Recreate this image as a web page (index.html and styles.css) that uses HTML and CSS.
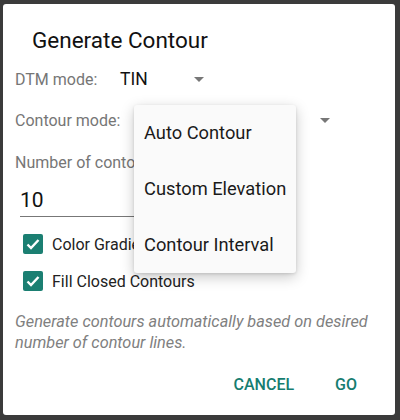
FILE: index.html
```html
<!DOCTYPE html>
<html lang="en">
<head>
  <meta charset="UTF-8">
  <title>Generate Contour</title>
  <link rel="stylesheet" href="styles.css">
</head>
<body>
  <div class="dialog">
    <h2 class="title">Generate Contour</h2>

    <div class="row">
      <span class="label">DTM mode:</span>
      <div class="select dtm">
        <span class="value">TIN</span>
        <span class="arrow"></span>
      </div>
    </div>

    <div class="row">
      <span class="label">Contour mode:</span>
      <div class="select mode">
        <span class="value"></span>
        <span class="arrow"></span>
      </div>
    </div>

    <div class="label num-label">Number of contour lines:</div>
    <div class="num-input">10</div>

    <label class="check"><span class="box"><svg viewBox="0 0 20 20" width="20" height="20"><path d="M4.5 10.5l3.5 3.5 7.5-8" fill="none" stroke="#fff" stroke-width="2.4"/></svg></span>Color Gradient</label>
    <label class="check"><span class="box"><svg viewBox="0 0 20 20" width="20" height="20"><path d="M4.5 10.5l3.5 3.5 7.5-8" fill="none" stroke="#fff" stroke-width="2.4"/></svg></span>Fill Closed Contours</label>

    <p class="hint">Generate contours automatically based on desired number of contour lines.</p>

    <div class="actions">
      <button class="btn">CANCEL</button>
      <button class="btn">GO</button>
    </div>

    <ul class="menu">
      <li>Auto Contour</li>
      <li>Custom Elevation</li>
      <li>Contour Interval</li>
    </ul>
  </div>
</body>
</html>
```

FILE: styles.css
```css
body {
  margin: 0;
  background: #3b3b3b;
  font-family: Roboto, sans-serif;
  height: 420px;
  overflow: hidden;
}
.dialog {
  position: relative;
  margin: 4px 5px 0 3px;
  height: 411px;
  background: #fff;
  border-radius: 3px;
  box-sizing: border-box;
  padding: 22px 0 0 12px;
}
.title {
  margin: 0 0 11px 17px;
  font-size: 22.5px;
  font-weight: 400;
  color: #111;
  line-height: 28px;
}
.row {
  display: flex;
  align-items: center;
  height: 28px;
  margin-bottom: 13px;
}
.row + .row { margin-bottom: 19px; }
.label {
  color: #767676;
  font-size: 16px;
  width: 105px;
  flex-shrink: 0;
  white-space: nowrap;
}
.select {
  display: flex;
  align-items: center;
  justify-content: space-between;
}
.select .value {
  font-size: 17.5px;
  color: #111;
}
.dtm { width: 84px; }
.mode { width: 210px; }
.arrow {
  width: 0;
  height: 0;
  border-left: 5.5px solid transparent;
  border-right: 5.5px solid transparent;
  border-top: 5.5px solid #777;
}
.num-label {
  width: auto;
  margin-top: 0;
  line-height: 20px;
}
.num-input {
  margin: 14px 0 0 5px;
  width: 200px;
  font-size: 21px;
  color: #111;
  line-height: 26px;
  padding-bottom: 3px;
  border-bottom: 1px solid #777;
}
.check {
  display: flex;
  align-items: center;
  font-size: 16px;
  color: #222;
  margin: 17px 0 0 8px;
  height: 20px;
}
.check + .check { margin-top: 17px; }
.box {
  width: 20px;
  height: 20px;
  background: #1b7f72;
  border-radius: 2px;
  margin-right: 9px;
}
.box svg { display: block; }
.hint {
  margin: 20px 14px 0 0;
  font-size: 16.3px;
  font-style: italic;
  color: #808080;
  line-height: 21px;
}
.actions {
  display: flex;
  justify-content: flex-end;
  gap: 41px;
  margin: 22px 38px 0 0;
}
.btn {
  background: none;
  border: none;
  padding: 0;
  font-family: Roboto, sans-serif;
  font-size: 16px;
  font-weight: 500;
  color: #167d70;
}
.menu {
  position: absolute;
  left: 131px;
  top: 101px;
  width: 162px;
  margin: 0;
  padding: 8px 0;
  list-style: none;
  background: #fafafa;
  border-radius: 3px;
  box-shadow: 0 4px 14px rgba(0, 0, 0, 0.22), 0 1px 3px rgba(0, 0, 0, 0.12);
}
.menu li {
  height: 56px;
  line-height: 40px;
  padding-left: 10px;
  font-size: 18.3px;
  color: #1a1a1a;
}
.menu li:last-child { height: 40px; }
```
